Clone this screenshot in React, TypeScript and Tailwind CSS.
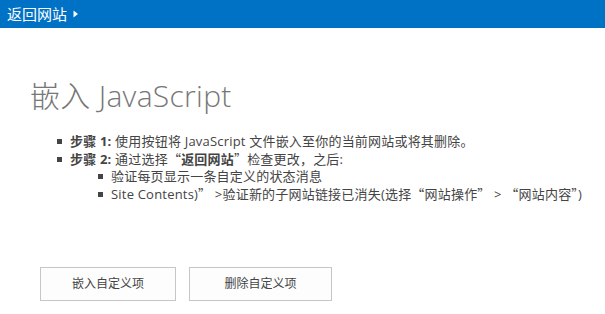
import React from "react";

const font = { fontFamily: '"Open Sans", "Noto Sans CJK SC", sans-serif' };

function Sq() {
  return <span className="inline-block w-[5px] h-[5px] bg-[#444] mr-[8px] mb-[2px] align-middle" />;
}

function Q({ c }: { c: string }) {
  return <span style={{ fontFamily: '"Noto Sans CJK SC", sans-serif' }}>{c}</span>;
}

export default function App() {
  return (
    <div className="w-[605px] h-[314px] bg-white overflow-hidden" style={font}>
      <div className="h-[28px] bg-[#0072c6] flex items-center pl-[7px]">
        <span className="text-white text-[15px] leading-none">返回网站</span>
        <svg width="6" height="8" viewBox="0 0 6 8" className="ml-[6px]">
          <path d="M0.5 0.5 L5 4 L0.5 7.5 Z" fill="#fff" />
        </svg>
      </div>
      <div className="pl-[30px] pt-[49px]">
        <h1 className="text-[30px] leading-[38px] font-light text-[#777] tracking-[0.3px]">嵌入 JavaScript</h1>
        <ul className="mt-[18px] pl-[27px] text-[13px] leading-[17px] text-[#444] tracking-[0.2px]">
          <li className="whitespace-nowrap">
            <Sq />
            <b>步骤 1:</b> 使用按钮将 JavaScript 文件嵌入至你的当前网站或将其删除。
          </li>
          <li className="whitespace-nowrap">
            <Sq />
            <b>步骤 2:</b> 通过选择<Q c="“" /><b>返回网站</b><Q c="”" />检查更改，之后:
            <ul className="pl-[41px]">
              <li>
                <Sq />
                验证每页显示一条自定义的状态消息
              </li>
              <li>
                <Sq />
                Site Contents)<Q c="”" /> &gt;验证新的子网站链接已消失(选择<Q c="“" />网站操作<Q c="”" /> &gt; <Q c="“" />网站内容<Q c="”" />)
              </li>
            </ul>
          </li>
        </ul>
        <div className="mt-[64px] pl-[10px] flex gap-[13px]">
          <button className="w-[136px] h-[34px] border border-[#c6c6c6] bg-[#fdfdfd] text-[12px] text-[#444]">嵌入自定义项</button>
          <button className="w-[143px] h-[34px] border border-[#c6c6c6] bg-[#fdfdfd] text-[12px] text-[#444]">删除自定义项</button>
        </div>
      </div>
    </div>
  );
}
